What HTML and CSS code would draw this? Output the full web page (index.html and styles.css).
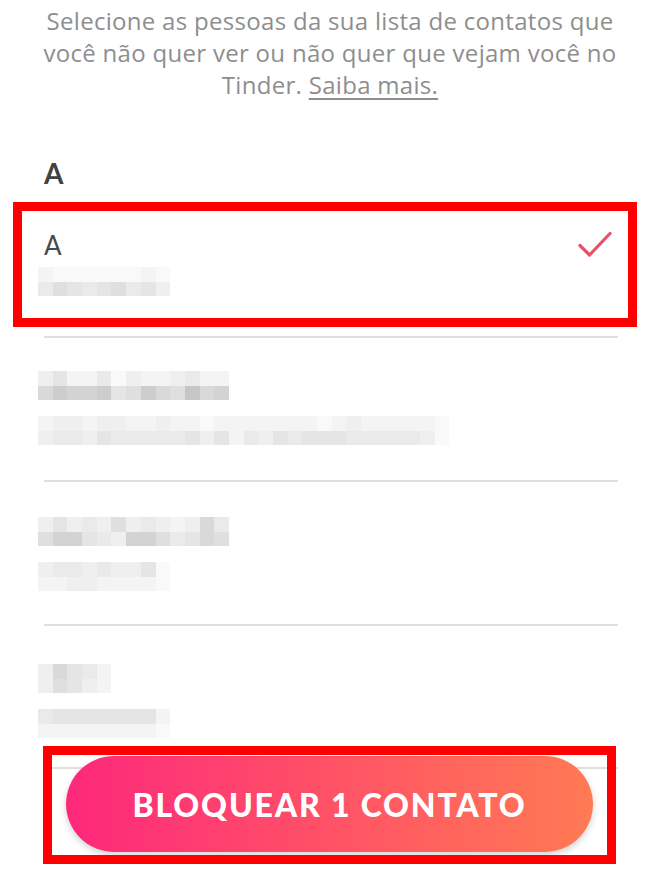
FILE: index.html
```html
<!DOCTYPE html>
<html lang="pt-BR">
<head>
<meta charset="utf-8">
<title>Bloquear contatos</title>
<link rel="stylesheet" href="styles.css">
</head>
<body>
<div class="screen">
  <p class="intro">Selecione as pessoas da sua lista de contatos que você não quer ver ou não quer que vejam você no Tinder. <a class="link">Saiba mais.</a></p>

  <h2 class="section">A</h2>

  <div class="row row-1">
    <div class="row-main">
      <div class="name">A</div>
      <svg class="check" width="34" height="28" viewBox="0 0 34 28"><path d="M2 14.5 L11.5 24 L32 2.5" fill="none" stroke="#e9506b" stroke-width="3.2" stroke-linecap="round" stroke-linejoin="round"/></svg>
    </div>
    <div class="blur">
      <div class="bl"><span class="g1"></span><span class="g0"></span><span class="g0"></span><span class="g0"></span><span class="g0"></span><span class="g0"></span><span class="g0"></span><span class="g1"></span><span class="g0"></span></div>
      <div class="bl"><span class="g3"></span><span class="g5"></span><span class="g4"></span><span class="g3"></span><span class="g4"></span><span class="g5"></span><span class="g3"></span><span class="g4"></span><span class="g2"></span></div>
    </div>
    <div class="mark mark-row"></div>
  </div>
  <div class="divider"></div>

  <div class="row row-2">
    <div class="blur">
      <div class="bl"><span class="g2"></span><span class="g4"></span><span class="g1"></span><span class="g1"></span><span class="g3"></span><span class="g0"></span><span class="g2"></span><span class="g1"></span><span class="g1"></span><span class="g2"></span><span class="g3"></span><span class="g1"></span><span class="g1"></span></div>
      <div class="bl"><span class="g6"></span><span class="g8"></span><span class="g7"></span><span class="g7"></span><span class="g8"></span><span class="g4"></span><span class="g5"></span><span class="g8"></span><span class="g6"></span><span class="g5"></span><span class="g9"></span><span class="g6"></span><span class="g7"></span></div>
    </div>
    <div class="blur">
      <div class="bl"><span class="g1"></span><span class="g2"></span><span class="g2"></span><span class="g1"></span><span class="g2"></span><span class="g2"></span><span class="g1"></span><span class="g1"></span><span class="g2"></span><span class="g1"></span><span class="g1"></span><span class="g0"></span><span class="g1"></span><span class="g1"></span><span class="g1"></span><span class="g1"></span><span class="g1"></span><span class="g1"></span><span class="g1"></span><span class="g0"></span><span class="g1"></span><span class="g2"></span><span class="g1"></span><span class="g1"></span><span class="g1"></span><span class="g1"></span><span class="g1"></span><span class="g0"></span></div>
      <div class="bl"><span class="g2"></span><span class="g3"></span><span class="g3"></span><span class="g2"></span><span class="g4"></span><span class="g3"></span><span class="g3"></span><span class="g3"></span><span class="g3"></span><span class="g3"></span><span class="g4"></span><span class="g2"></span><span class="g4"></span><span class="g1"></span><span class="g3"></span><span class="g2"></span><span class="g4"></span><span class="g3"></span><span class="g4"></span><span class="g4"></span><span class="g4"></span><span class="g3"></span><span class="g3"></span><span class="g3"></span><span class="g3"></span><span class="g3"></span><span class="g2"></span><span class="g0"></span></div>
    </div>
  </div>
  <div class="divider"></div>

  <div class="row row-3">
    <div class="blur">
      <div class="bl"><span class="g2"></span><span class="g4"></span><span class="g2"></span><span class="g3"></span><span class="g2"></span><span class="g5"></span><span class="g2"></span><span class="g3"></span><span class="g2"></span><span class="g1"></span><span class="g2"></span><span class="g6"></span><span class="g3"></span></div>
      <div class="bl"><span class="g5"></span><span class="g7"></span><span class="g7"></span><span class="g4"></span><span class="g3"></span><span class="g2"></span><span class="g7"></span><span class="g7"></span><span class="g5"></span><span class="g3"></span><span class="g4"></span><span class="g6"></span><span class="g5"></span></div>
    </div>
    <div class="blur">
      <div class="bl"><span class="g2"></span><span class="g3"></span><span class="g3"></span><span class="g2"></span><span class="g3"></span><span class="g2"></span><span class="g2"></span><span class="g4"></span><span class="g0"></span></div>
      <div class="bl"><span class="g1"></span><span class="g1"></span><span class="g2"></span><span class="g2"></span><span class="g1"></span><span class="g1"></span><span class="g1"></span><span class="g1"></span><span class="g0"></span></div>
    </div>
  </div>
  <div class="divider"></div>

  <div class="row row-4">
    <div class="blur">
      <div class="bl"><span class="g2"></span><span class="g6"></span><span class="g4"></span><span class="g3"></span><span class="g1"></span></div>
      <div class="bl"><span class="g2"></span><span class="g5"></span><span class="g4"></span><span class="g2"></span><span class="g1"></span></div>
    </div>
    <div class="blur">
      <div class="bl"><span class="g3"></span><span class="g4"></span><span class="g4"></span><span class="g4"></span><span class="g4"></span><span class="g4"></span><span class="g4"></span><span class="g4"></span><span class="g1"></span></div>
      <div class="bl"><span class="g1"></span><span class="g1"></span><span class="g1"></span><span class="g1"></span><span class="g1"></span><span class="g1"></span><span class="g1"></span><span class="g1"></span><span class="g0"></span></div>
    </div>
  </div>
  <div class="divider"></div>

  <div class="footer">
    <button class="cta">BLOQUEAR 1 CONTATO</button>
    <div class="mark mark-cta"></div>
  </div>
</div>
</body>
</html>
```
FILE: styles.css
```css
* { box-sizing: border-box; }
html, body { margin: 0; padding: 0; background: #ffffff; }
body { font-family: "Open Sans", Lato, Arial, sans-serif; }

.screen {
  position: relative;
  width: 660px;
  height: 880px;
  overflow: hidden;
  background: #ffffff;
}

.intro {
  margin: 4.7px 0 0;
  padding: 0 30px;
  text-align: center;
  font-size: 24px;
  line-height: 32px;
  letter-spacing: 0.3px;
  color: #8e8e8e;
}
.link {
  color: #8e8e8e;
  text-decoration: underline;
  text-underline-offset: 4px;
  text-decoration-thickness: 1.5px;
}

.section {
  margin: 55.5px 0 2px;
  padding-left: 44px;
  font-family: Lato, "Open Sans", Arial, sans-serif;
  font-size: 28px;
  line-height: 34px;
  font-weight: 700;
  color: #424242;
}

.row {
  position: relative;
  display: flex;
  flex-direction: column;
  padding-left: 38px;
}
.row-1 { height: 144px; padding-top: 39px; gap: 7px; }
.row-2 { height: 142px; padding-top: 33px; gap: 16px; }
.row-3 { height: 142px; padding-top: 35px; gap: 16px; }
.row-4 { height: 141px; padding-top: 38px; gap: 16px; }

.row-main {
  display: flex;
  align-items: center;
  justify-content: space-between;
  padding-left: 6px;
  padding-right: 48px;
  height: 29px;
}
.name {
  font-family: Lato, "Open Sans", Arial, sans-serif;
  font-size: 26px;
  line-height: 29px;
  color: #4a4a4a;
}
.check { display: block; margin-top: -2px; }

.blur { display: flex; flex-direction: column; }
.bl { display: flex; }
.bl span { display: block; width: 14.7px; height: 14.5px; }
.g0 { background: #f9f9f9; }
.g1 { background: #f4f4f4; }
.g2 { background: #efefef; }
.g3 { background: #eaeaea; }
.g4 { background: #e5e5e5; }
.g5 { background: #dfdfdf; }
.g6 { background: #d9d9d9; }
.g7 { background: #d3d3d3; }
.g8 { background: #cdcdcd; }
.g9 { background: #c6c6c6; }

.divider {
  height: 2px;
  margin: 0 42px 0 44px;
  background: #e0e0e0;
}

.footer {
  position: absolute;
  left: 0;
  right: 0;
  top: 756px;
  padding: 0 67px 0 66px;
}
.cta {
  display: block;
  width: 100%;
  height: 96px;
  border: none;
  border-radius: 48px;
  background: linear-gradient(to right, #fd287b 0%, #ff5a62 60%, #ff7a54 100%);
  box-shadow: 0 3px 7px rgba(0, 0, 0, 0.18);
  color: #ffffff;
  font-family: Lato, "Open Sans", Arial, sans-serif;
  font-size: 32px;
  font-weight: 900;
  letter-spacing: 1.8px;
}

.mark {
  position: absolute;
  border: 9px solid #ff0000;
  pointer-events: none;
}
.mark-row { left: 13px; top: 10px; width: 624px; height: 125px; }
.mark-cta { left: 43px; top: -10px; width: 573px; height: 118px; }
```
